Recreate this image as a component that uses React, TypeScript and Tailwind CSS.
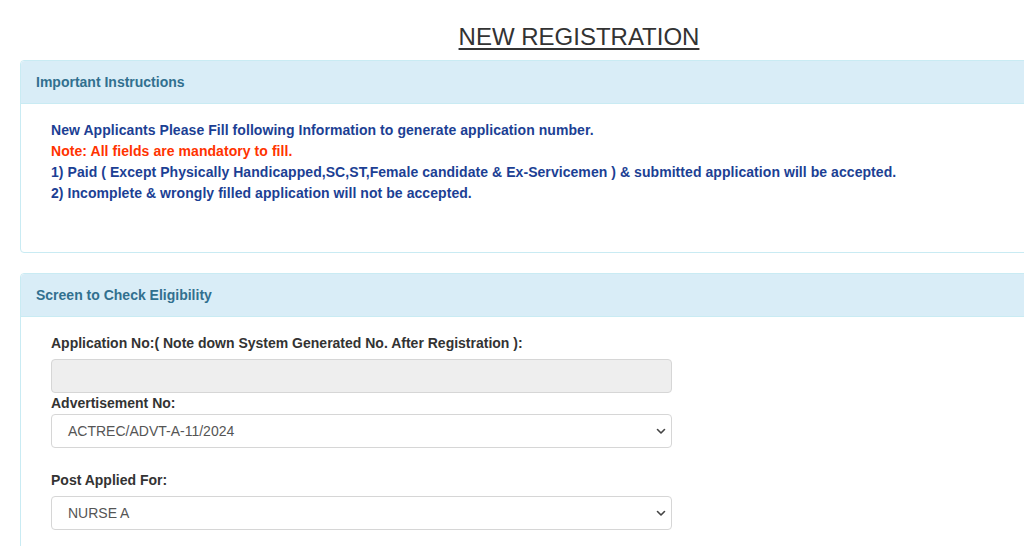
import React from "react";

const Chevron = () => (
  <svg width="12" height="12" viewBox="0 0 12 12" className="absolute right-[4px] top-1/2 -translate-y-1/2">
    <path d="M2.5 4.5 L6 8 L9.5 4.5" fill="none" stroke="#444" strokeWidth="1.6" strokeLinecap="round" strokeLinejoin="round" />
  </svg>
);

const SelectBox = ({ value }: { value: string }) => (
  <div className="relative h-[34px] w-[621px] rounded-[4px] border border-[#d6d6d6] bg-white pl-[16px] flex items-center text-[14px] text-[#555]">
    {value}
    <Chevron />
  </div>
);

export default function App() {
  return (
    <div className="w-[1024px] h-[546px] overflow-hidden bg-white" style={{ fontFamily: '"Liberation Sans", Arial, sans-serif' }}>
      <div className="w-[1118px] ml-[20px] pt-[21px]">
        <div className="flex justify-center h-[39px]">
          <h1 className="text-[24px] leading-[32px] text-[#333] underline underline-offset-[3px] decoration-[2px]">NEW REGISTRATION</h1>
        </div>

        <div className="rounded-[4px] border border-[#c9ebf3] h-[193px]">
          <div className="h-[43px] bg-[#d9edf7] border-b border-[#c9ebf3] rounded-t-[4px] pl-[15px] flex items-center text-[14px] font-bold text-[#31708f]">
            Important Instructions
          </div>
          <div className="pl-[30px] pt-[16px] text-[14px] font-bold leading-[21px] tracking-[0.06px] text-[#1c3f94]">
            <div>New Applicants Please Fill following Information to generate application number.</div>
            <div className="text-[#ff3300]">Note: All fields are mandatory to fill.</div>
            <div>1) Paid ( Except Physically Handicapped,SC,ST,Female candidate &amp; Ex-Servicemen ) &amp; submitted application will be accepted.</div>
            <div>2) Incomplete &amp; wrongly filled application will not be accepted.</div>
          </div>
        </div>

        <div className="mt-[20px] rounded-[4px] border border-[#c9ebf3] h-[300px]">
          <div className="h-[43px] bg-[#d9edf7] border-b border-[#c9ebf3] rounded-t-[4px] pl-[15px] flex items-center text-[14px] font-bold text-[#31708f]">
            Screen to Check Eligibility
          </div>
          <div className="pl-[30px] pt-[16px] text-[14px]">
            <div className="font-bold text-[#333] leading-[20px]">Application No:( Note down System Generated No. After Registration ):</div>
            <div className="mt-[6px] h-[34px] w-[621px] rounded-[4px] border border-[#d6d6d6] bg-[#eeeeee]"></div>
            <div className="font-bold text-[#333] leading-[20px]">Advertisement No:</div>
            <div className="mt-[1px]"><SelectBox value="ACTREC/ADVT-A-11/2024" /></div>
            <div className="mt-[22px] font-bold text-[#333] leading-[20px]">Post Applied For:</div>
            <div className="mt-[6px]"><SelectBox value="NURSE A" /></div>
          </div>
        </div>
      </div>
    </div>
  );
}
